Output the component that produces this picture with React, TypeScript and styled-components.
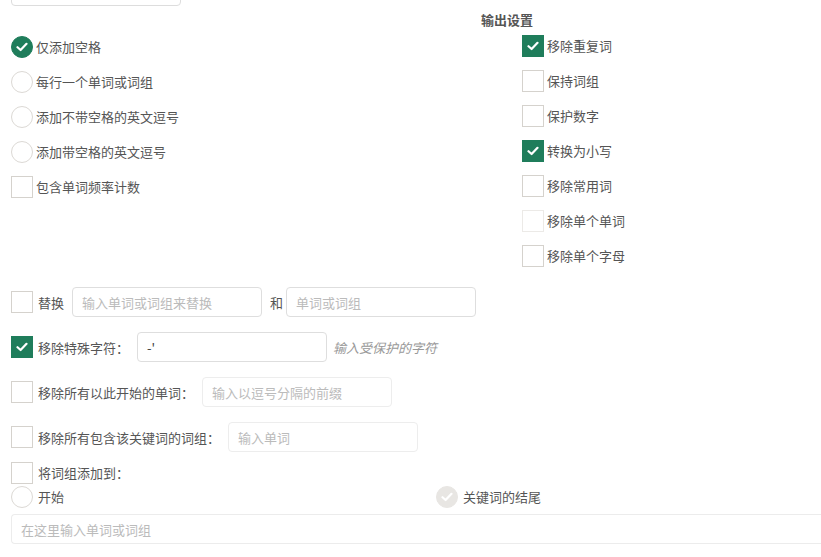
import React from 'react';
import styled, { createGlobalStyle, css } from 'styled-components';

const GREEN = '#1f7d5b';

const GlobalStyle = createGlobalStyle`
  html, body {
    margin: 0;
    padding: 0;
    background: #fff;
    overflow: hidden;
  }
  body {
    font-family: "Noto Sans CJK SC", "Noto Sans", sans-serif;
    font-size: 13px;
    color: #555;
  }
`;

const Page = styled.div`
  padding-left: 11px;
`;

const TopInput = styled.div`
  width: 168px;
  height: 30px;
  margin-top: -26px;
  border: 1px solid #ddd;
  border-radius: 4px;
`;

const Columns = styled.div`
  display: grid;
  grid-template-columns: 470px 1fr;
  margin-top: 6px;
`;

const Column = styled.div<{ $top?: number; $indent?: number }>`
  display: flex;
  flex-direction: column;
  gap: 13px;
  padding-top: ${p => p.$top ?? 0}px;
  padding-left: ${p => p.$indent ?? 0}px;
`;

const Heading = styled.div`
  font-weight: 700;
  font-size: 13px;
  line-height: 18px;
  color: #555;
  margin-bottom: 6px;
  margin-top: -1px;
`;

const Option = styled.label<{ $gap?: number }>`
  display: flex;
  align-items: center;
  height: 22px;
  gap: ${p => p.$gap ?? 3}px;
  line-height: 22px;
  white-space: nowrap;
`;

const boxBase = css`
  width: 22px;
  height: 22px;
  box-sizing: border-box;
  flex: none;
  display: flex;
  align-items: center;
  justify-content: center;
`;

const Box = styled.span<{ $checked?: boolean; $faint?: boolean }>`
  ${boxBase};
  border: 1px solid ${p => (p.$faint ? '#eceae7' : '#d5d2cd')};
  ${p =>
    p.$checked &&
    css`
      background: ${GREEN};
      border-color: ${GREEN};
    `}
`;

const Circle = styled.span<{ $checked?: boolean; $disabled?: boolean }>`
  ${boxBase};
  border-radius: 50%;
  border: 1px solid #dcd9d5;
  ${p =>
    p.$checked &&
    css`
      background: ${GREEN};
      border-color: ${GREEN};
    `}
  ${p =>
    p.$disabled &&
    css`
      background: #e8e6e3;
      border-color: #e8e6e3;
    `}
`;

const Check = () => (
  <svg width="12" height="10" viewBox="0 0 12 10">
    <path d="M1.5 5.2 L4.6 8 L10.5 1.8" fill="none" stroke="#fff" strokeWidth="2.2" strokeLinecap="round" strokeLinejoin="round" />
  </svg>
);

const Rows = styled.div`
  display: flex;
  flex-direction: column;
  margin-top: 20px;
`;

const FieldRow = styled.div<{ $mt?: number }>`
  display: flex;
  align-items: center;
  height: 30px;
  margin-top: ${p => p.$mt ?? 0}px;
  white-space: nowrap;
`;

const RowLabel = styled.span<{ $before?: number; $after?: number }>`
  margin-left: ${p => p.$before ?? 5}px;
  margin-right: ${p => p.$after ?? 8}px;
`;

const Field = styled.div<{ $faint?: boolean; $width?: string }>`
  width: ${p => p.$width ?? '190px'};
  height: 30px;
  box-sizing: border-box;
  border: 1px solid ${p => (p.$faint ? '#ededed' : '#dedede')};
  border-radius: 4px;
  display: flex;
  align-items: center;
  padding-left: 9px;
  color: #bbb;
  flex: none;
`;

const Value = styled.span`
  color: #444;
`;

const Hint = styled.span`
  margin-left: 6px;
  font-style: italic;
  color: #999;
`;

const Placement = styled.div`
  display: grid;
  grid-template-columns: 425px 1fr;
  margin-top: 2px;
`;

const BottomField = styled(Field)`
  margin-top: 6px;
  border-color: #ececec;
  border-right: none;
  border-radius: 4px 0 0 4px;
`;

export default function App() {
  return (
    <>
      <GlobalStyle />
      <Page>
        <TopInput />
        <Columns>
          <Column $top={24}>
            <Option><Circle $checked><Check /></Circle>仅添加空格</Option>
            <Option><Circle />每行一个单词或词组</Option>
            <Option><Circle />添加不带空格的英文逗号</Option>
            <Option><Circle />添加带空格的英文逗号</Option>
            <Option><Box />包含单词频率计数</Option>
          </Column>
          <div>
            <Heading>输出设置</Heading>
            <Column $indent={41}>
              <Option><Box $checked><Check /></Box>移除重复词</Option>
              <Option><Box />保持词组</Option>
              <Option><Box />保护数字</Option>
              <Option><Box $checked><Check /></Box>转换为小写</Option>
              <Option><Box />移除常用词</Option>
              <Option><Box $faint />移除单个单词</Option>
              <Option><Box />移除单个字母</Option>
            </Column>
          </div>
        </Columns>

        <Rows>
          <FieldRow>
            <Box />
            <RowLabel>替换</RowLabel>
            <Field>输入单词或词组来替换</Field>
            <RowLabel $before={8} $after={3}>和</RowLabel>
            <Field>单词或词组</Field>
          </FieldRow>
          <FieldRow $mt={15}>
            <Box $checked><Check /></Box>
            <RowLabel>移除特殊字符：</RowLabel>
            <Field><Value>-'</Value></Field>
            <Hint>输入受保护的字符</Hint>
          </FieldRow>
          <FieldRow $mt={15}>
            <Box />
            <RowLabel>移除所有以此开始的单词：</RowLabel>
            <Field $faint>输入以逗号分隔的前缀</Field>
          </FieldRow>
          <FieldRow $mt={15}>
            <Box />
            <RowLabel>移除所有包含该关键词的词组：</RowLabel>
            <Field $faint>输入单词</Field>
          </FieldRow>
          <Option $gap={5} style={{ marginTop: 10 }}>
            <Box />将词组添加到：
          </Option>
          <Placement>
            <Option $gap={5}><Circle />开始</Option>
            <Option $gap={5}><Circle $disabled><Check /></Circle>关键词的结尾</Option>
          </Placement>
          <BottomField $width="810px">在这里输入单词或词组</BottomField>
        </Rows>
      </Page>
    </>
  );
}
